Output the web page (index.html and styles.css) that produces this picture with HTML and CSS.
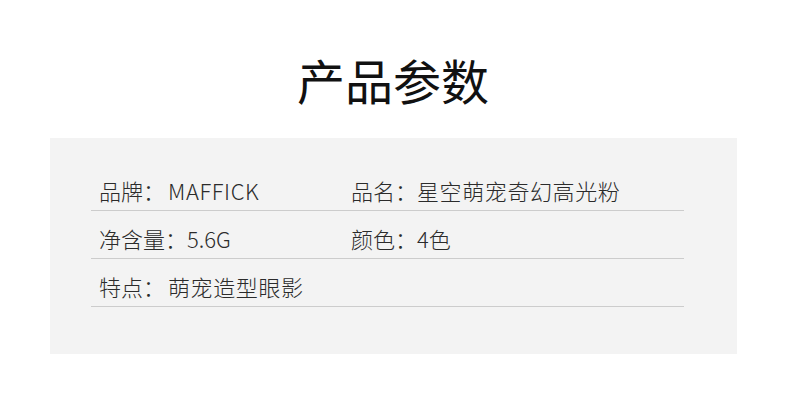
FILE: index.html
```html
<!DOCTYPE html>
<html lang="zh-CN">
<head>
<meta charset="utf-8">
<title>产品参数</title>
<link rel="stylesheet" href="styles.css">
</head>
<body>
<div class="page">
  <h1 class="title">产品参数</h1>
  <div class="panel">
    <div class="table">
      <div class="row">
        <div class="cell cell-left">品牌：<span class="val gap">MAFFICK</span></div>
        <div class="cell">品名：<span class="val">星空萌宠奇幻高光粉</span></div>
      </div>
      <div class="row">
        <div class="cell cell-left">净含量：5.6G</div>
        <div class="cell">颜色：4色</div>
      </div>
      <div class="row">
        <div class="cell cell-left">特点：<span class="val gap">萌宠造型眼影</span></div>
        <div class="cell"></div>
      </div>
    </div>
  </div>
</div>
</body>
</html>
```
FILE: styles.css
```css
html, body {
  margin: 0;
  padding: 0;
  background: #ffffff;
}
body {
  font-family: "Noto Sans CJK SC", "Noto Sans", sans-serif;
  color: #2b2b2b;
}
.page {
  width: 790px;
  padding-top: 49px;
}
.title {
  margin: 0;
  font-size: 48px;
  line-height: 60px;
  font-weight: 400;
  text-align: center;
  color: #111111;
  padding-right: 4px;
}
.panel {
  margin: 29px 0 0 50px;
  width: 687px;
  height: 216px;
  background: #f3f3f3;
  box-sizing: border-box;
  padding: 25px 0 0 41px;
}
.table {
  width: 593px;
  display: flex;
  flex-direction: column;
}
.row {
  display: flex;
  padding: 12px 0 5px 8px;
  border-bottom: 1px solid #cccccc;
  font-size: 22px;
  font-weight: 300;
  line-height: 30px;
  height: 30px;
}
.cell-left {
  width: 252px;
}
.val {
  letter-spacing: 0.6px;
}
.gap {
  margin-left: 3px;
}
```
